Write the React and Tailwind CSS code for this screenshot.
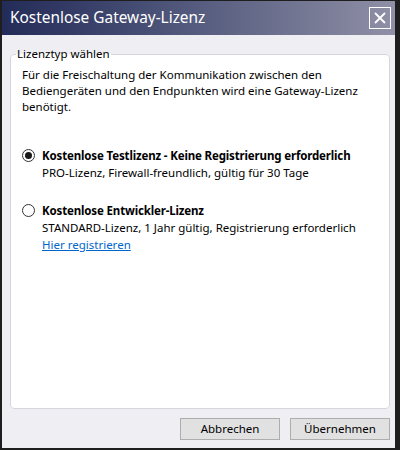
import React from "react";

export default function App() {
  return (
    <div
      className="w-[400px] h-[450px] bg-[#1e1e1e] pt-[1px] pl-[2px] pr-[5px] pb-[2px] flex flex-col"
      style={{ fontFamily: '"Segoe UI", "Noto Sans", sans-serif' }}
    >
      <div className="h-[34px] shrink-0 flex items-center justify-between pl-[8px] pr-[4px] bg-gradient-to-r from-[#232b58] to-[#9090a6]">
        <span className="text-white text-[15.4px] leading-[20px]">Kostenlose Gateway-Lizenz</span>
        <button className="w-[22px] h-[22px] border border-white flex items-center justify-center">
          <svg width="12" height="12" viewBox="0 0 12 12">
            <path d="M1 1 L11 11 M11 1 L1 11" stroke="white" strokeWidth="1.8" />
          </svg>
        </button>
      </div>
      <div className="flex-1 bg-[#efeff3] flex flex-col pl-[8px] pr-[5px]">
        <fieldset className="mt-[11px] flex-1 border border-[#d5d5dd] rounded-[4px] bg-white pl-[11px] pr-[8px] pt-[5px] min-h-0">
          <legend className="-ml-[6px] px-[1px] text-[11.5px] leading-[16px] text-black">Lizenztyp wählen</legend>
          <p className="text-[11.5px] leading-[16px] text-black">
            Für die Freischaltung der Kommunikation zwischen den
            <br />
            Bediengeräten und den Endpunkten wird eine Gateway-Lizenz
            <br />
            benötigt.
          </p>
          <div className="mt-[32px] flex gap-[7px]">
            <div className="w-[13px] h-[13px] mt-[2px] rounded-full border border-[#333] flex items-center justify-center shrink-0">
              <div className="w-[7px] h-[7px] rounded-full bg-[#1a1a1a]" />
            </div>
            <div className="text-[11.5px] leading-[17px] text-black">
              <div className="font-bold tracking-[-0.15px]">Kostenlose Testlizenz - Keine Registrierung erforderlich</div>
              <div>PRO-Lizenz, Firewall-freundlich, gültig für 30 Tage</div>
            </div>
          </div>
          <div className="mt-[21px] flex gap-[7px]">
            <div className="w-[13px] h-[13px] mt-[2px] rounded-full border border-[#333] shrink-0" />
            <div className="text-[11.5px] leading-[17px] text-black">
              <div className="font-bold tracking-[-0.15px]">Kostenlose Entwickler-Lizenz</div>
              <div>STANDARD-Lizenz, 1 Jahr gültig, Registrierung erforderlich</div>
              <div className="text-[#0066cc] underline">Hier registrieren</div>
            </div>
          </div>
        </fieldset>
        <div className="mt-[9px] mb-[8px] flex justify-end gap-[10px]">
          <button className="w-[100px] h-[22px] bg-[#e1e1e1] border border-[#adadad] text-[11.5px] text-black">Abbrechen</button>
          <button className="w-[100px] h-[22px] bg-[#e1e1e1] border border-[#adadad] text-[11.5px] text-black">Übernehmen</button>
        </div>
      </div>
    </div>
  );
}
